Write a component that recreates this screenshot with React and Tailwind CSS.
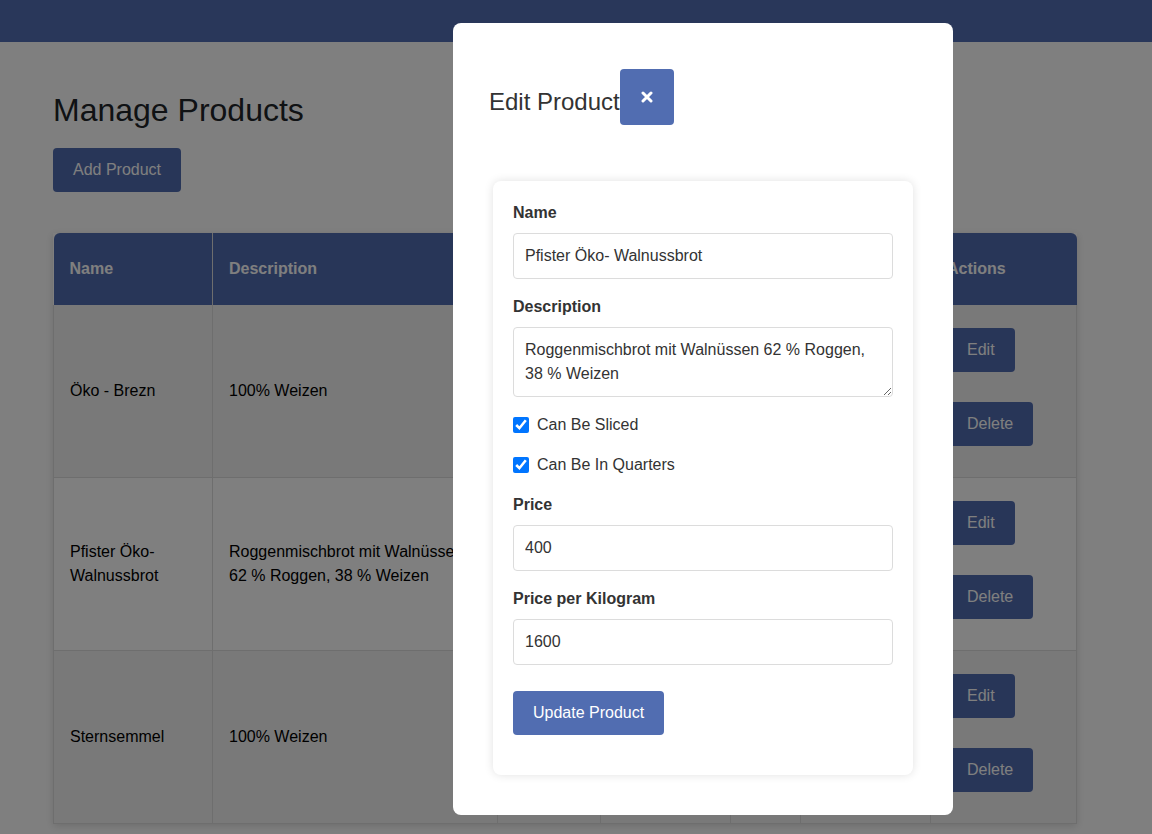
import React from "react";

const PRODUCTS = [
  { name: "Öko - Brezn", desc: "100% Weizen", price: "90", ppk: "900", sliced: "No", quarters: "No" },
  { name: "Pfister Öko-Walnussbrot", desc: "Roggenmischbrot mit Walnüssen 62 % Roggen, 38 % Weizen", price: "400", ppk: "1600", sliced: "Yes", quarters: "Yes" },
  { name: "Sternsemmel", desc: "100% Weizen", price: "80", ppk: "800", sliced: "No", quarters: "No" },
];

const COLS = [
  { label: "Name", w: "w-[159px]" },
  { label: "Description", w: "w-[285px]" },
  { label: "Price", w: "w-[103px]" },
  { label: "Per Kg", w: "w-[130px]" },
  { label: "Sliced", w: "w-[70px]" },
  { label: "Quarters", w: "w-[130px]" },
  { label: "Actions", w: "w-[146px]" },
];

function Field({ label, value, gap }) {
  return (
    <div className={gap}>
      <label className="block font-bold leading-6 mb-2 text-[#333]">{label}</label>
      <input
        readOnly
        value={value}
        className="w-full h-[46px] border border-[#dcdcdc] rounded px-[11px] text-[16px] text-[#333] outline-none"
      />
    </div>
  );
}

function Check({ label }) {
  return (
    <label className="flex items-center gap-2 h-6 mb-4 text-[#333]">
      <input type="checkbox" checked readOnly className="w-4 h-4 m-0 accent-[#0075ff]" />
      <span>{label}</span>
    </label>
  );
}

export default function App() {
  return (
    <div className="relative min-h-[834px] bg-white text-[16px] text-black" style={{ fontFamily: '"Liberation Sans", Arial, sans-serif' }}>
      {/* Top bar */}
      <div className="h-[42px] bg-[#526eb4]" />

      {/* Page */}
      <div className="ml-[53px] w-[1023px] pb-10">
        <h1 className="mt-[49px] text-[32px] leading-[38px] text-[#212529]">Manage Products</h1>
        <button className="mt-[19px] h-[44px] px-5 rounded bg-[#516db1] text-white">Add Product</button>

        <table className="mt-[41px] w-full table-fixed border-collapse shadow-[0_2px_8px_rgba(0,0,0,0.15)]">
          <thead>
            <tr className="bg-[#516db1] text-white">
              {COLS.map((c, i) => (
                <th
                  key={c.label}
                  className={`${c.w} text-left font-bold px-4 py-6 leading-6 whitespace-nowrap ${i > 0 ? "border-l border-[#dddddd]" : ""} ${i === 0 ? "rounded-tl-md" : ""} ${i === COLS.length - 1 ? "rounded-tr-md" : ""}`}
                >
                  {c.label}
                </th>
              ))}
            </tr>
          </thead>
          <tbody>
            {PRODUCTS.map((p, i) => (
              <tr key={p.name} className={`${i % 2 === 0 ? "bg-[#f3f3f3]" : "bg-white"} border-b border-[#dddddd]`}>
                <td className="px-4 leading-6 align-middle border-l border-[#dddddd]">{p.name}</td>
                <td className="px-4 leading-6 align-middle border-l border-[#dddddd]">{p.desc}</td>
                <td className="px-4 leading-6 align-middle border-l border-[#dddddd]">{p.price}</td>
                <td className="px-4 leading-6 align-middle border-l border-[#dddddd]">{p.ppk}</td>
                <td className="px-4 leading-6 align-middle border-l border-[#dddddd]">{p.sliced}</td>
                <td className="px-4 leading-6 align-middle border-l border-[#dddddd]">{p.quarters}</td>
                <td className="px-4 pt-[23px] pb-[31px] align-middle border-x border-[#dddddd]">
                  <div className="flex flex-col items-start gap-[30px]">
                    <button className="h-[44px] px-5 rounded bg-[#516db1] text-white">Edit</button>
                    <button className="h-[44px] px-5 rounded bg-[#516db1] text-white">Delete</button>
                  </div>
                </td>
              </tr>
            ))}
          </tbody>
        </table>
      </div>

      {/* Backdrop */}
      <div className="fixed inset-0 bg-black/50" />

      {/* Modal */}
      <div className="absolute left-[453px] top-[23px] w-[500px] bg-white rounded-lg pt-[46px] pb-10">
        <div className="flex items-start pl-9">
          <h2 className="mt-[18px] text-[24px] leading-[29px] text-[#333]">Edit Product</h2>
          <button className="w-[54px] h-[56px] rounded bg-[#516db1] flex items-center justify-center">
            <svg width="12" height="12" viewBox="0 0 12 12" fill="none" stroke="white" strokeWidth="3" strokeLinecap="round">
              <path d="M2 2L10 10M10 2L2 10" />
            </svg>
          </button>
        </div>

        <div className="mx-10 mt-[56px] rounded-lg bg-white shadow-[0_0_10px_rgba(0,0,0,0.12)] px-5 pt-5 pb-10">
          <Field label="Name" value="Pfister Öko- Walnussbrot" gap="mb-4" />
          <div className="mb-4">
            <label className="block font-bold leading-6 mb-2 text-[#333]">Description</label>
            <textarea
              readOnly
              value="Roggenmischbrot mit Walnüssen 62 % Roggen, 38 % Weizen"
              className="block w-full h-[70px] border border-[#dcdcdc] rounded px-[11px] py-[10px] leading-6 text-[16px] text-[#333] outline-none"
            />
          </div>
          <Check label="Can Be Sliced" />
          <Check label="Can Be In Quarters" />
          <Field label="Price" value="400" gap="mb-4" />
          <Field label="Price per Kilogram" value="1600" gap="mb-[26px]" />
          <button className="h-[44px] px-5 rounded bg-[#516db1] text-white">Update Product</button>
        </div>
      </div>
    </div>
  );
}
